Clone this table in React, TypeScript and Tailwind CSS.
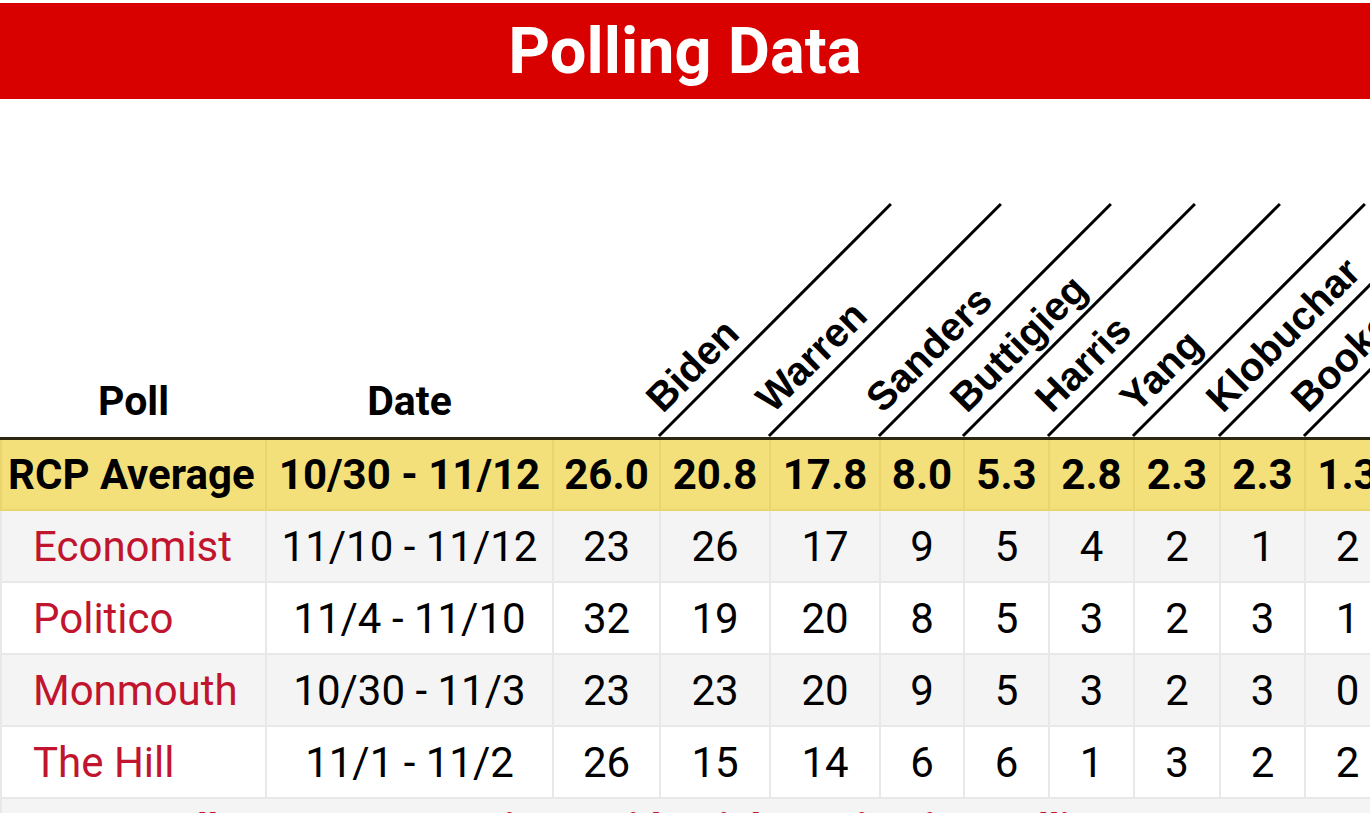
import React from "react";

type Poll = { name: string; date: string; values: string[] };

const CANDIDATES = ["Biden", "Warren", "Sanders", "Buttigieg", "Harris", "Yang", "Klobuchar", "Booker", "Steyer"];

// column widths in px, poll / date / candidates
const COL_WIDTHS = ["w-[265px]", "w-[287px]", "w-[107px]", "w-[110px]", "w-[110px]", "w-[84px]", "w-[85px]", "w-[85px]", "w-[86px]", "w-[85px]", "w-[85px]"];

const AVERAGE: Poll = {
  name: "RCP Average",
  date: "10/30 - 11/12",
  values: ["26.0", "20.8", "17.8", "8.0", "5.3", "2.8", "2.3", "2.3", "1.3"],
};

const POLLS: Poll[] = [
  { name: "Economist", date: "11/10 - 11/12", values: ["23", "26", "17", "9", "5", "4", "2", "1", "2"] },
  { name: "Politico", date: "11/4 - 11/10", values: ["32", "19", "20", "8", "5", "3", "2", "3", "1"] },
  { name: "Monmouth", date: "10/30 - 11/3", values: ["23", "23", "20", "9", "5", "3", "2", "3", "0"] },
  { name: "The Hill", date: "11/1 - 11/2", values: ["26", "15", "14", "6", "6", "1", "3", "2", "2"] },
];

function RotatedHeader({ label }: { label: string }) {
  return (
    <th className="relative p-0 align-bottom">
      <div
        className="absolute left-full bottom-0 w-[328px] origin-bottom-left -rotate-45 border-b-[3px] border-black pl-[18px] pb-[5px] text-left text-[40px] font-bold leading-none text-black whitespace-nowrap"
        style={{ fontFamily: '"Liberation Sans", Arial, sans-serif' }}
      >
        {label}
      </div>
    </th>
  );
}

export default function App() {
  return (
    <div className="w-[1370px] h-[813px] overflow-hidden bg-white pt-[3px]" style={{ fontFamily: "Roboto, Arial, sans-serif" }}>
      {/* Title bar */}
      <div className="h-[96px] bg-[#d90000] flex items-center justify-center">
        <h1 className="text-[65px] font-bold text-white leading-none">Polling Data</h1>
      </div>

      <div className="mt-[1px] w-[1370px] overflow-hidden">
        <table className="table-fixed border-collapse w-[1389px] text-[42px] text-black">
          <colgroup>
            {COL_WIDTHS.map((w, i) => (
              <col key={i} className={w} />
            ))}
          </colgroup>
          <thead>
            <tr className="h-[338px] border-b-[3px] border-[#2b2713]">
              <th className="p-0 pb-[9px] align-bottom text-center text-[41px] font-bold leading-tight">Poll</th>
              <th className="p-0 pb-[9px] align-bottom text-center text-[41px] font-bold leading-tight">Date</th>
              {CANDIDATES.map((c) => (
                <RotatedHeader key={c} label={c} />
              ))}
            </tr>
          </thead>
          <tbody>
            <tr className="h-[72px] bg-[#f3e07a] font-bold">
              <td className="border-2 border-[#e9d56c] border-t-0 pl-[6px] text-left whitespace-nowrap">{AVERAGE.name}</td>
              <td className="border-2 border-[#e9d56c] border-t-0 text-center whitespace-nowrap">{AVERAGE.date}</td>
              {AVERAGE.values.map((v, i) => (
                <td key={i} className="border-2 border-[#e9d56c] border-t-0 text-center">{v}</td>
              ))}
              <td className="border-2 border-[#e9d56c] border-t-0 text-center">1.0</td>
            </tr>
            {POLLS.map((p, r) => (
              <tr key={p.name} className={r % 2 === 0 ? "h-[72px] bg-[#f4f4f4]" : "h-[72px] bg-white"}>
                <td className="border-2 border-[#e8e8e8] pl-[31px] text-left text-[#c1142e] whitespace-nowrap">{p.name}</td>
                <td className="border-2 border-[#e8e8e8] text-center whitespace-nowrap">{p.date}</td>
                {p.values.map((v, i) => (
                  <td key={i} className="border-2 border-[#e8e8e8] text-center">{v}</td>
                ))}
                <td className="border-2 border-[#e8e8e8] text-center">1</td>
              </tr>
            ))}
            <tr className="h-[72px] bg-[#f4f4f4]">
              <td colSpan={11} className="border-2 border-[#e8e8e8] pt-[10px] align-top text-left pl-[168px] text-[40px] font-bold leading-none text-[#c1142e] whitespace-nowrap">
                All 2020 Democratic Presidential Nomination Polling Data
              </td>
            </tr>
          </tbody>
        </table>
      </div>
    </div>
  );
}
